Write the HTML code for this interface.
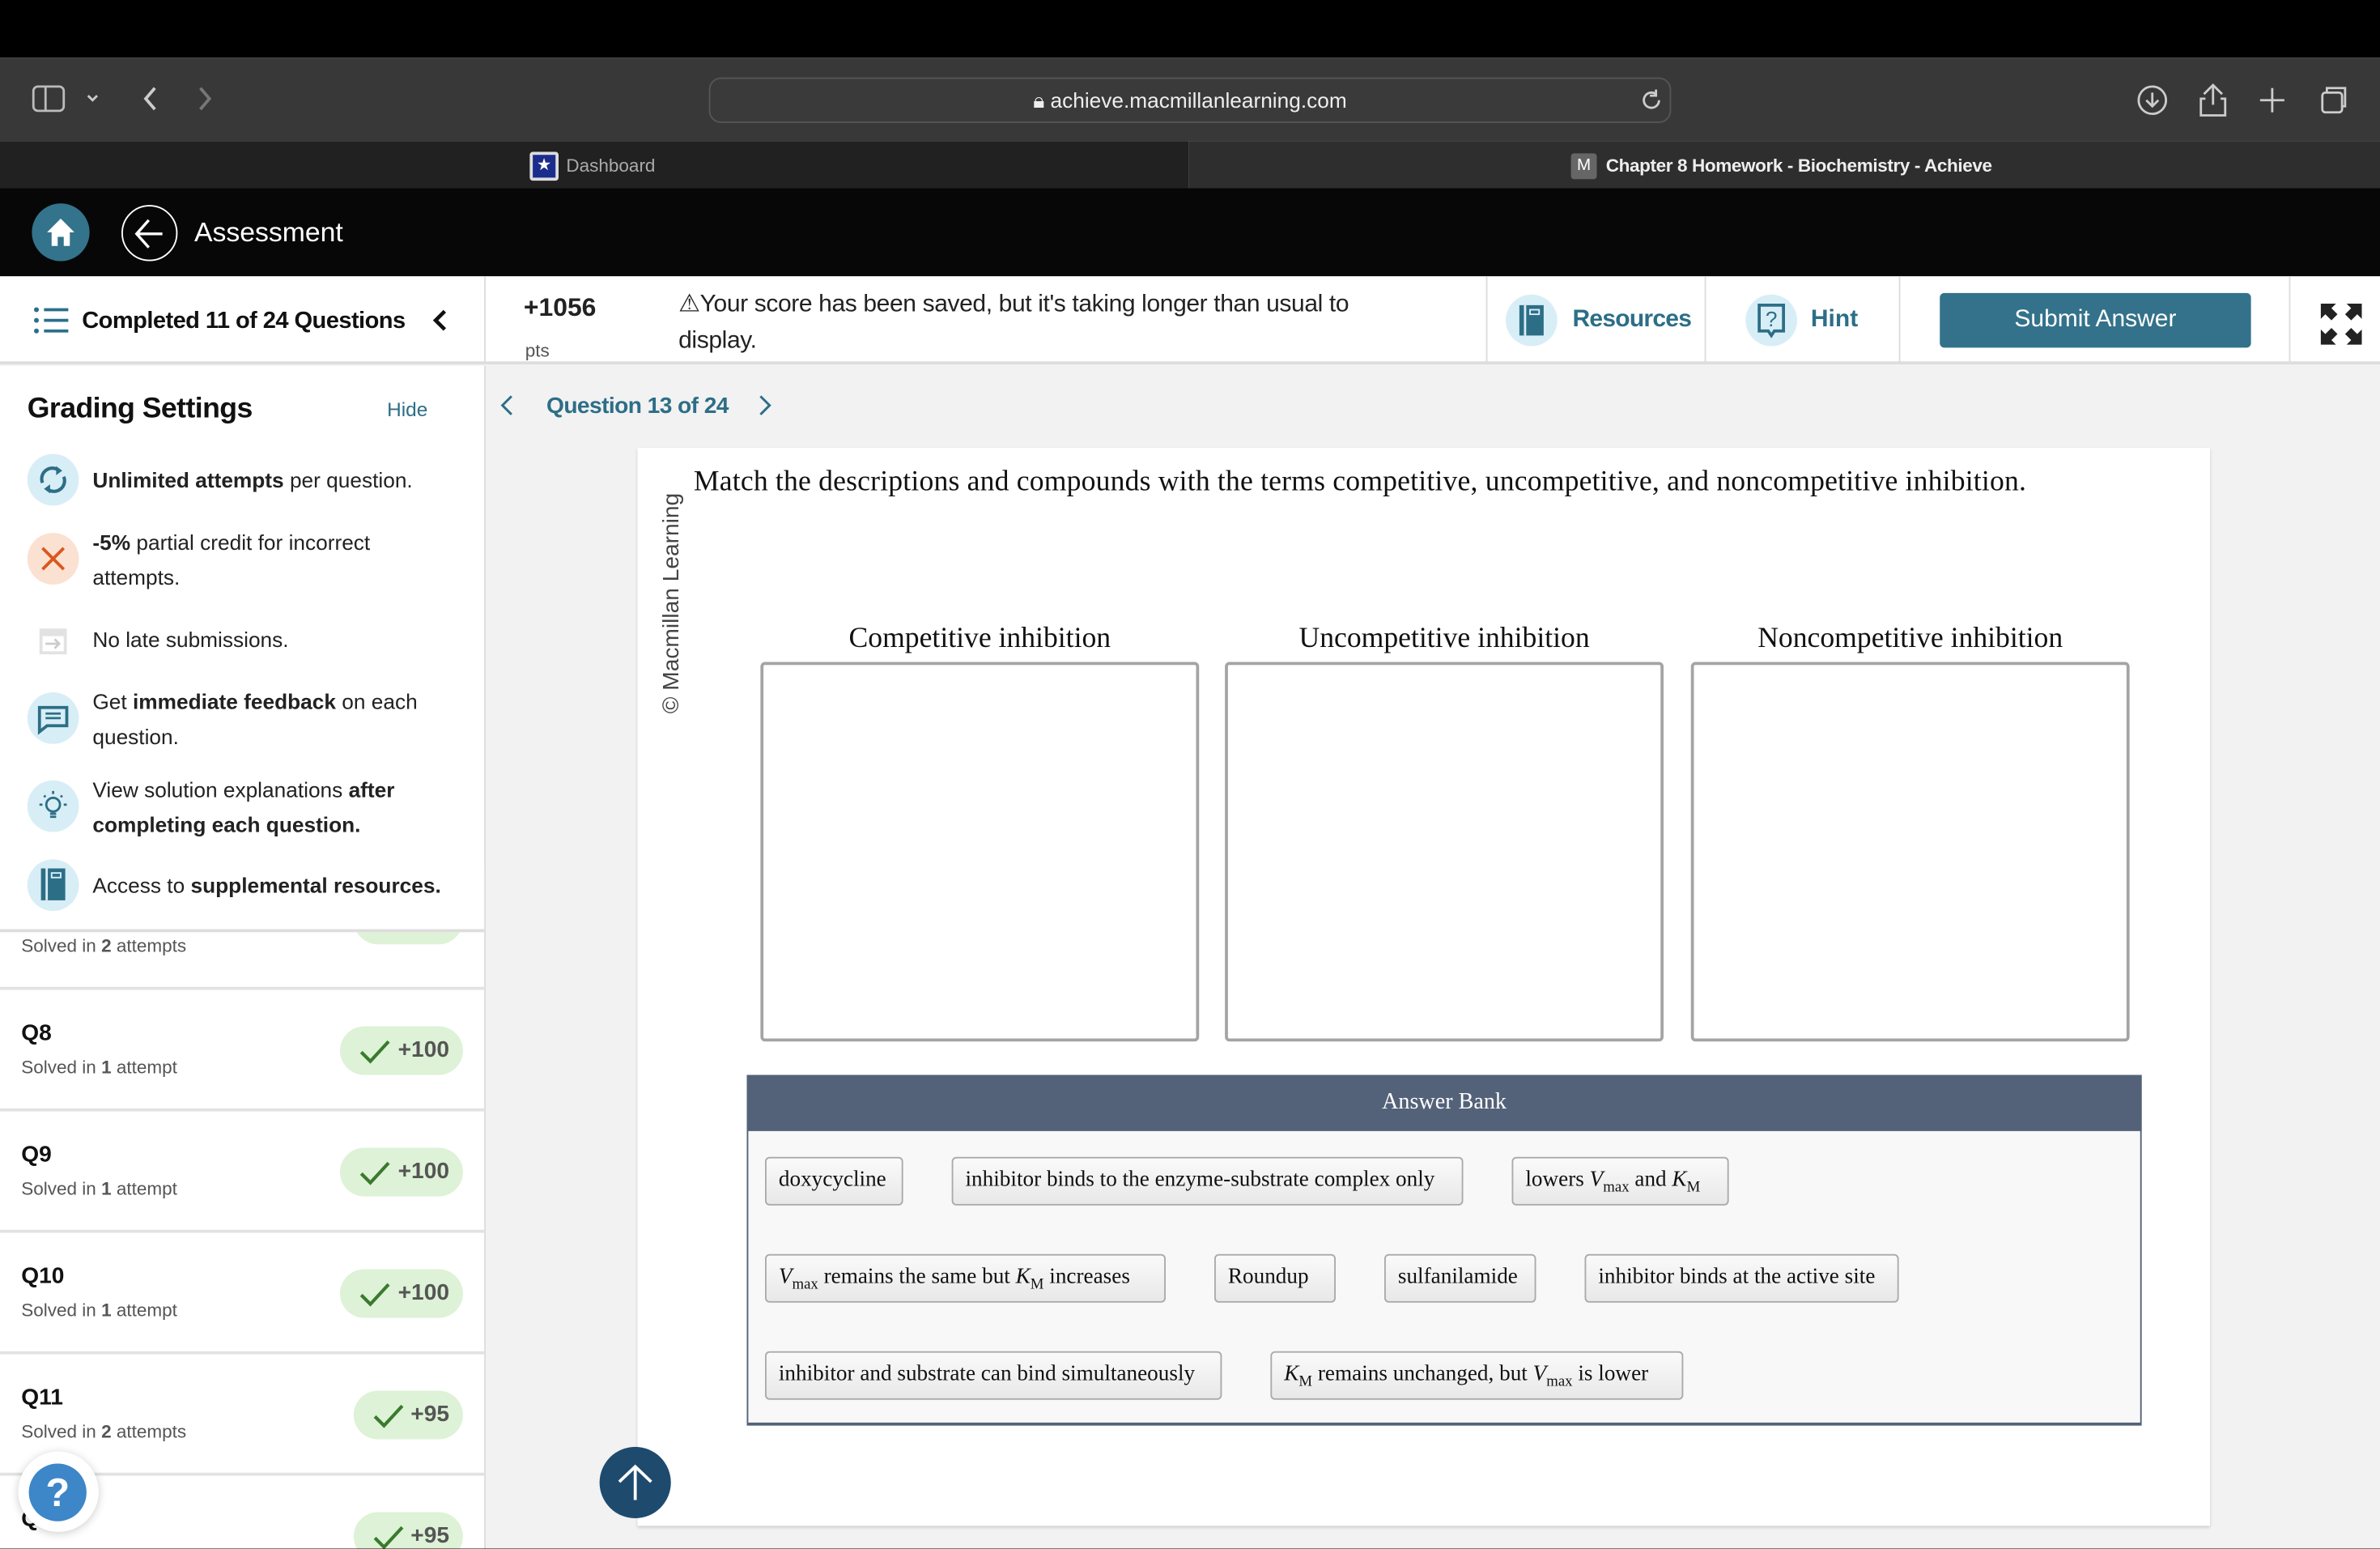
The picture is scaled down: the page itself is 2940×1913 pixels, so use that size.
<!DOCTYPE html>
<html><head><meta charset="utf-8"><style>
*{box-sizing:border-box;margin:0;padding:0}
html,body{width:2940px;height:1912px;overflow:hidden;background:#000}
#r{position:absolute;left:0;top:0;width:1568px;height:1020px;transform:scale(1.875);transform-origin:0 0;font-family:"Liberation Sans",sans-serif;background:#f2f2f2;overflow:hidden}
.a{position:absolute}
.serif{font-family:"Liberation Serif",serif}
.si{position:absolute;left:18px;width:34px;height:34px;border-radius:50%;background:#d8eef6}
.st{position:absolute;left:61px;font-size:14px;line-height:23px;color:#222;width:245px}
.q{position:absolute;left:0;width:319px;height:80px;background:#fff;border-bottom:2px solid #e2e2e2}
.q b{position:absolute;left:14px;top:20px;font-size:15px;color:#111}
.q span{position:absolute;left:14px;top:44px;font-size:12px;color:#555}
.pill{position:absolute;right:14px;top:24px;height:32px;border-radius:16px;background:#ddf2d6;color:#555;font-size:15px;font-weight:bold;line-height:32px;padding:0 9px 0 38px}
.pill svg{position:absolute;left:12px;top:8px}
.chip{position:absolute;height:32px;border:1px solid #aaa;border-radius:3px;background:linear-gradient(#fafafa,#e8e8e8);font-family:"Liberation Serif",serif;font-size:14.5px;line-height:28px;padding:0 8px;color:#111;white-space:nowrap}
.box{position:absolute;top:436px;width:289px;height:250px;border:2px solid #a4a4a4;border-radius:3px;background:#fff}
.ch{position:absolute;top:410px;width:289px;text-align:center;font-family:"Liberation Serif",serif;font-size:19px;color:#111}
</style></head><body><div id="r">
<div class="a" style="left:0;top:0;width:1568px;height:38px;background:#000"></div>
<div class="a" style="left:0;top:38px;width:1568px;height:55px;background:#383838"></div>
<svg class="a" style="left:20px;top:55px" width="140" height="22" viewBox="0 0 140 22"><rect x="2" y="2" width="20" height="16" rx="3" fill="none" stroke="#bbb" stroke-width="1.5"/><line x1="10" y1="2" x2="10" y2="18" stroke="#bbb" stroke-width="1.5"/><path d="M38 8l3 3 3-3" fill="none" stroke="#ccc" stroke-width="1.5"/><path d="M82 3l-6 7 6 7" fill="none" stroke="#ccc" stroke-width="2"/><path d="M112 3l6 7-6 7" fill="none" stroke="#777" stroke-width="2"/></svg>
<div class="a" style="left:467px;top:51px;width:634px;height:30px;border:1px solid #555;border-radius:8px;background:#3a3a3a"></div>
<div class="a" style="left:467px;top:58px;width:634px;text-align:center;color:#eee;font-size:14px">🔒︎ achieve.macmillanlearning.com</div>
<svg class="a" style="left:1080px;top:58px" width="16" height="16"><path d="M13 8a5 5 0 1 1-2-4" fill="none" stroke="#ccc" stroke-width="1.5"/><path d="M11 1v4h-4" fill="none" stroke="#ccc" stroke-width="1.5"/></svg>
<svg class="a" style="left:1405px;top:54px" width="150" height="24"><circle cx="13" cy="12" r="9" fill="none" stroke="#ccc" stroke-width="1.5"/><path d="M13 7v9M9 12l4 4 4-4" fill="none" stroke="#ccc" stroke-width="1.5"/><path d="M47 8l6-6 6 6M53 2v13M48 11h-3v11h16V11h-3" fill="none" stroke="#ccc" stroke-width="1.5"/><path d="M92 4v16M84 12h16" stroke="#ccc" stroke-width="1.5"/><rect x="125" y="7" width="13" height="13" rx="2" fill="none" stroke="#ccc" stroke-width="1.5"/><path d="M128 7V4h12v12h-2" fill="none" stroke="#ccc" stroke-width="1.5"/></svg>
<div class="a" style="left:0;top:93px;width:783px;height:31px;background:#212121"></div>
<div class="a" style="left:783px;top:93px;width:785px;height:31px;background:#2e2e2e"></div>
<div class="a" style="left:349px;top:100px;width:19px;height:19px;background:#1a2d8c;border:2px solid #ddd;border-radius:2px;color:#fff;font-size:11px;text-align:center;line-height:15px">★</div>
<div class="a" style="left:373px;top:102px;color:#aaa;font-size:12px">Dashboard</div>
<div class="a" style="left:1035px;top:101px;width:17px;height:17px;background:#666;border-radius:2px;color:#fff;font-size:11px;text-align:center;line-height:17px">M</div>
<div class="a" style="left:1058px;top:102px;color:#eee;font-size:12px;font-weight:bold;letter-spacing:-0.2px">Chapter 8 Homework - Biochemistry - Achieve</div>
<div class="a" style="left:0;top:124px;width:1568px;height:58px;background:#070707"></div>
<div class="a" style="left:21px;top:134px;width:38px;height:38px;border-radius:50%;background:#33738c"></div>
<svg class="a" style="left:29px;top:142px" width="22" height="22"><path d="M11 2L2 11h3v9h4v-6h4v6h4v-9h3z" fill="#fff"/></svg>
<div class="a" style="left:80px;top:135px;width:37px;height:37px;border-radius:50%;border:1.5px solid #fff"></div>
<svg class="a" style="left:86px;top:141px" width="26" height="26"><path d="M12 4L4 13l8 9M4 13h17" fill="none" stroke="#fff" stroke-width="1.8"/></svg>
<div class="a" style="left:128px;top:143px;color:#fff;font-size:18px">Assessment</div>
<div class="a" style="left:0;top:182px;width:1568px;height:58px;background:#fff;border-bottom:2px solid #ddd"></div>
<div class="a" style="left:319px;top:182px;width:1px;height:58px;background:#ddd"></div>
<div class="a" style="left:979px;top:182px;width:1px;height:58px;background:#ddd"></div>
<div class="a" style="left:1123px;top:182px;width:1px;height:58px;background:#ddd"></div>
<div class="a" style="left:1251px;top:182px;width:1px;height:58px;background:#ddd"></div>
<div class="a" style="left:1508px;top:182px;width:1px;height:58px;background:#ddd"></div>
<svg class="a" style="left:22px;top:201px" width="24" height="20"><g fill="#2a6f8a"><circle cx="2" cy="3" r="1.6"/><circle cx="2" cy="10" r="1.6"/><circle cx="2" cy="17" r="1.6"/><rect x="7" y="2" width="16" height="2"/><rect x="7" y="9" width="16" height="2"/><rect x="7" y="16" width="16" height="2"/></g></svg>
<div class="a" style="left:54px;top:203px;font-size:15.5px;font-weight:bold;color:#111;letter-spacing:-0.3px">Completed 11 of 24 Questions</div>
<svg class="a" style="left:284px;top:203px" width="12" height="16"><path d="M9 2L3 8l6 6" fill="none" stroke="#111" stroke-width="2.5"/></svg>
<div class="a" style="left:345px;top:193px;font-size:17px;font-weight:bold;color:#222">+1056</div>
<div class="a" style="left:346px;top:224px;font-size:12px;color:#555">pts</div>
<div class="a" style="left:447px;top:189px;font-size:16px;line-height:24px;color:#222;width:480px;letter-spacing:-0.2px">⚠︎Your score has been saved, but it's taking longer than usual to display.</div>
<div class="a" style="left:992px;top:194px;width:34px;height:34px;border-radius:50%;background:#d8eef6"></div>
<svg class="a" style="left:1000px;top:200px" width="18" height="22"><rect x="1" y="1" width="16" height="20" fill="#2d6e87"/><rect x="4" y="1" width="1.5" height="20" fill="#d8eef6"/><rect x="8" y="4" width="6" height="3" fill="none" stroke="#d8eef6"/></svg>
<div class="a" style="left:1036px;top:202px;font-size:16px;font-weight:bold;color:#2d6e87;letter-spacing:-0.4px">Resources</div>
<div class="a" style="left:1150px;top:194px;width:34px;height:34px;border-radius:50%;background:#d8eef6"></div>
<svg class="a" style="left:1157px;top:199px" width="20" height="26"><path d="M2 2h16v17h-6l-2 3-2-3H2z" fill="none" stroke="#2d6e87" stroke-width="2"/><text x="10" y="16" font-size="14" font-family="Liberation Sans" fill="#2d6e87" text-anchor="middle">?</text></svg>
<div class="a" style="left:1193px;top:202px;font-size:16px;font-weight:bold;color:#2d6e87">Hint</div>
<div class="a" style="left:1278px;top:193px;width:205px;height:36px;border-radius:3px;background:#33728a;color:#fff;font-size:16px;text-align:center;line-height:36px">Submit Answer</div>
<svg class="a" style="left:1528px;top:199px" width="29" height="29"><g fill="#222"><path d="M1 1h10l-3 3 4 4-4 4-4-4-3 3z"/><path d="M28 1h-10l3 3-4 4 4 4 4-4 3 3z"/><path d="M1 28h10l-3-3 4-4-4-4-4 4-3-3z"/><path d="M28 28h-10l3-3-4-4 4-4 4 4 3-3z"/></g></svg>
<div class="a" style="left:0;top:241px;width:320px;height:779px;background:#fff;border-right:2px solid #ddd"></div>
<div class="q" style="top:572px"><span style="top:44px">Solved in <b style="position:static;font-size:12px;color:#555">2</b> attempts</span><div class="pill" style="top:18px">+95</div></div>
<div class="q" style="top:652px"><b>Q8</b><span>Solved in <b style="position:static;font-size:12px;color:#555">1</b> attempt</span><div class="pill"><svg width="22" height="17"><path d="M2 9l6 6L20 2" fill="none" stroke="#3a7a2e" stroke-width="2.2"/></svg>+100</div></div>
<div class="q" style="top:732px"><b>Q9</b><span>Solved in <b style="position:static;font-size:12px;color:#555">1</b> attempt</span><div class="pill"><svg width="22" height="17"><path d="M2 9l6 6L20 2" fill="none" stroke="#3a7a2e" stroke-width="2.2"/></svg>+100</div></div>
<div class="q" style="top:812px"><b>Q10</b><span>Solved in <b style="position:static;font-size:12px;color:#555">1</b> attempt</span><div class="pill"><svg width="22" height="17"><path d="M2 9l6 6L20 2" fill="none" stroke="#3a7a2e" stroke-width="2.2"/></svg>+100</div></div>
<div class="q" style="top:892px"><b>Q11</b><span>Solved in <b style="position:static;font-size:12px;color:#555">2</b> attempts</span><div class="pill"><svg width="22" height="17"><path d="M2 9l6 6L20 2" fill="none" stroke="#3a7a2e" stroke-width="2.2"/></svg>+95</div></div>
<div class="q" style="top:972px"><b>Q12</b><div class="pill"><svg width="22" height="17"><path d="M2 9l6 6L20 2" fill="none" stroke="#3a7a2e" stroke-width="2.2"/></svg>+95</div></div>
<div class="a" style="left:0;top:241px;width:319px;height:373px;background:#fff;border-bottom:2px solid #ddd"></div>
<div class="a" style="left:18px;top:259px;font-size:19px;font-weight:bold;color:#111;letter-spacing:-0.3px">Grading Settings</div>
<div class="a" style="left:255px;top:262px;font-size:13px;color:#2d6e87">Hide</div>
<div class="si" style="top:299px"></div>
<svg class="a" style="left:24px;top:305px" width="22" height="22"><path d="M4 13a7 7 0 0 1 11-8M18 9a7 7 0 0 1-11 8" fill="none" stroke="#2d6e87" stroke-width="2.2"/><path d="M13 2l4 3-4 3zM9 20l-4-3 4-3z" fill="#2d6e87"/></svg>
<div class="st" style="top:305px"><b>Unlimited attempts</b> per question.</div>
<div class="si" style="top:351px;background:#fbe1d2"></div>
<svg class="a" style="left:26px;top:359px" width="18" height="18"><path d="M2 2l14 14M16 2L2 16" stroke="#d9571e" stroke-width="2"/></svg>
<div class="st" style="top:346px;width:205px"><b>-5%</b> partial credit for incorrect attempts.</div>
<svg class="a" style="left:24px;top:410px" width="22" height="22"><rect x="2" y="4" width="18" height="17" fill="#e2e2e2"/><rect x="4" y="9" width="14" height="10" fill="#fff"/><path d="M6 14h9M12 11l3 3-3 3" fill="none" stroke="#ccc" stroke-width="1.5"/></svg>
<div class="st" style="top:410px">No late submissions.</div>
<div class="si" style="top:456px"></div>
<svg class="a" style="left:24px;top:463px" width="22" height="22"><path d="M2 3h18v12H7l-5 4z" fill="none" stroke="#2d6e87" stroke-width="2"/><path d="M6 7h10M6 10h10" stroke="#2d6e87" stroke-width="1.5"/></svg>
<div class="st" style="top:451px">Get <b>immediate feedback</b> on each question.</div>
<div class="si" style="top:514px"></div>
<svg class="a" style="left:24px;top:520px" width="22" height="22"><circle cx="11" cy="10" r="4.5" fill="none" stroke="#2d6e87" stroke-width="1.5"/><path d="M9 16h4M9 18h4M2 10h2M18 10h2M5 4l1 1M17 4l-1 1M11 1v2" stroke="#2d6e87" stroke-width="1.5"/></svg>
<div class="st" style="top:509px">View solution explanations <b>after completing each question.</b></div>
<div class="si" style="top:566px"></div>
<svg class="a" style="left:26px;top:571px" width="18" height="24"><rect x="1" y="1" width="16" height="21" fill="#2d6e87"/><rect x="4" y="1" width="1.5" height="21" fill="#d8eef6"/><rect x="8" y="4" width="6" height="3" fill="none" stroke="#d8eef6"/></svg>
<div class="st" style="top:572px">Access to <b>supplemental resources.</b></div>
<svg class="a" style="left:328px;top:259px" width="12" height="16"><path d="M9 2L3 8l6 6" fill="none" stroke="#2d6e87" stroke-width="1.6"/></svg>
<div class="a" style="left:360px;top:259px;font-size:15px;font-weight:bold;color:#2d6e87;letter-spacing:-0.3px">Question 13 of 24</div>
<svg class="a" style="left:498px;top:259px" width="12" height="16"><path d="M3 2l6 6-6 6" fill="none" stroke="#2d6e87" stroke-width="1.6"/></svg>
<div class="a" style="left:420px;top:295px;width:1036px;height:710px;background:#fff;box-shadow:0 1px 2px #ccc"></div>
<div class="a" style="left:434px;top:470px;transform:rotate(-90deg);transform-origin:0 0;font-size:15px;color:#444;white-space:nowrap">© Macmillan Learning</div>
<div class="a serif" style="left:457px;top:307px;font-size:19px;color:#111;white-space:nowrap;letter-spacing:0.1px">Match the descriptions and compounds with the terms competitive, uncompetitive, and noncompetitive inhibition.</div>
<div class="ch" style="left:501px">Competitive inhibition</div>
<div class="ch" style="left:807px">Uncompetitive inhibition</div>
<div class="ch" style="left:1114px">Noncompetitive inhibition</div>
<div class="box" style="left:501px"></div>
<div class="box" style="left:807px"></div>
<div class="box" style="left:1114px"></div>
<div class="a" style="left:492px;top:708px;width:919px;height:231px;background:#f8f8f8;border:1px solid #536278;border-bottom-width:2px"></div>
<div class="a serif" style="left:492px;top:708px;width:919px;height:37px;background:#536278;color:#fff;font-size:15px;text-align:center;line-height:37px">Answer Bank</div>
<div class="chip" style="left:504px;top:762px;width:91px">doxycycline</div>
<div class="chip" style="left:627px;top:762px;width:337px">inhibitor binds to the enzyme-substrate complex only</div>
<div class="chip" style="left:996px;top:762px;width:143px">lowers <i>V</i><sub style="font-size:10px">max</sub> and <i>K</i><sub style="font-size:10px">M</sub></div>
<div class="chip" style="left:504px;top:826px;width:264px"><i>V</i><sub style="font-size:10px">max</sub> remains the same but <i>K</i><sub style="font-size:10px">M</sub> increases</div>
<div class="chip" style="left:800px;top:826px;width:80px">Roundup</div>
<div class="chip" style="left:912px;top:826px;width:100px">sulfanilamide</div>
<div class="chip" style="left:1044px;top:826px;width:207px">inhibitor binds at the active site</div>
<div class="chip" style="left:504px;top:890px;width:301px">inhibitor and substrate can bind simultaneously</div>
<div class="chip" style="left:837px;top:890px;width:272px"><i>K</i><sub style="font-size:10px">M</sub> remains unchanged, but <i>V</i><sub style="font-size:10px">max</sub> is lower</div>
<div class="a" style="left:395px;top:953px;width:47px;height:47px;border-radius:50%;background:#1e4a6e"></div>
<svg class="a" style="left:403px;top:961px" width="31" height="31"><path d="M15.5 27V5M5 15L15.5 5 26 15" fill="none" stroke="#fff" stroke-width="2"/></svg>
<div class="a" style="left:12px;top:956px;width:53px;height:53px;border-radius:50%;background:#fff;box-shadow:0 1px 6px rgba(0,0,0,.2)"></div>
<div class="a" style="left:19px;top:964px;width:38px;height:38px;border-radius:50%;background:#3d86c8;color:#fff;font-size:26px;font-weight:bold;text-align:center;line-height:38px">?</div>
</div></body></html>
